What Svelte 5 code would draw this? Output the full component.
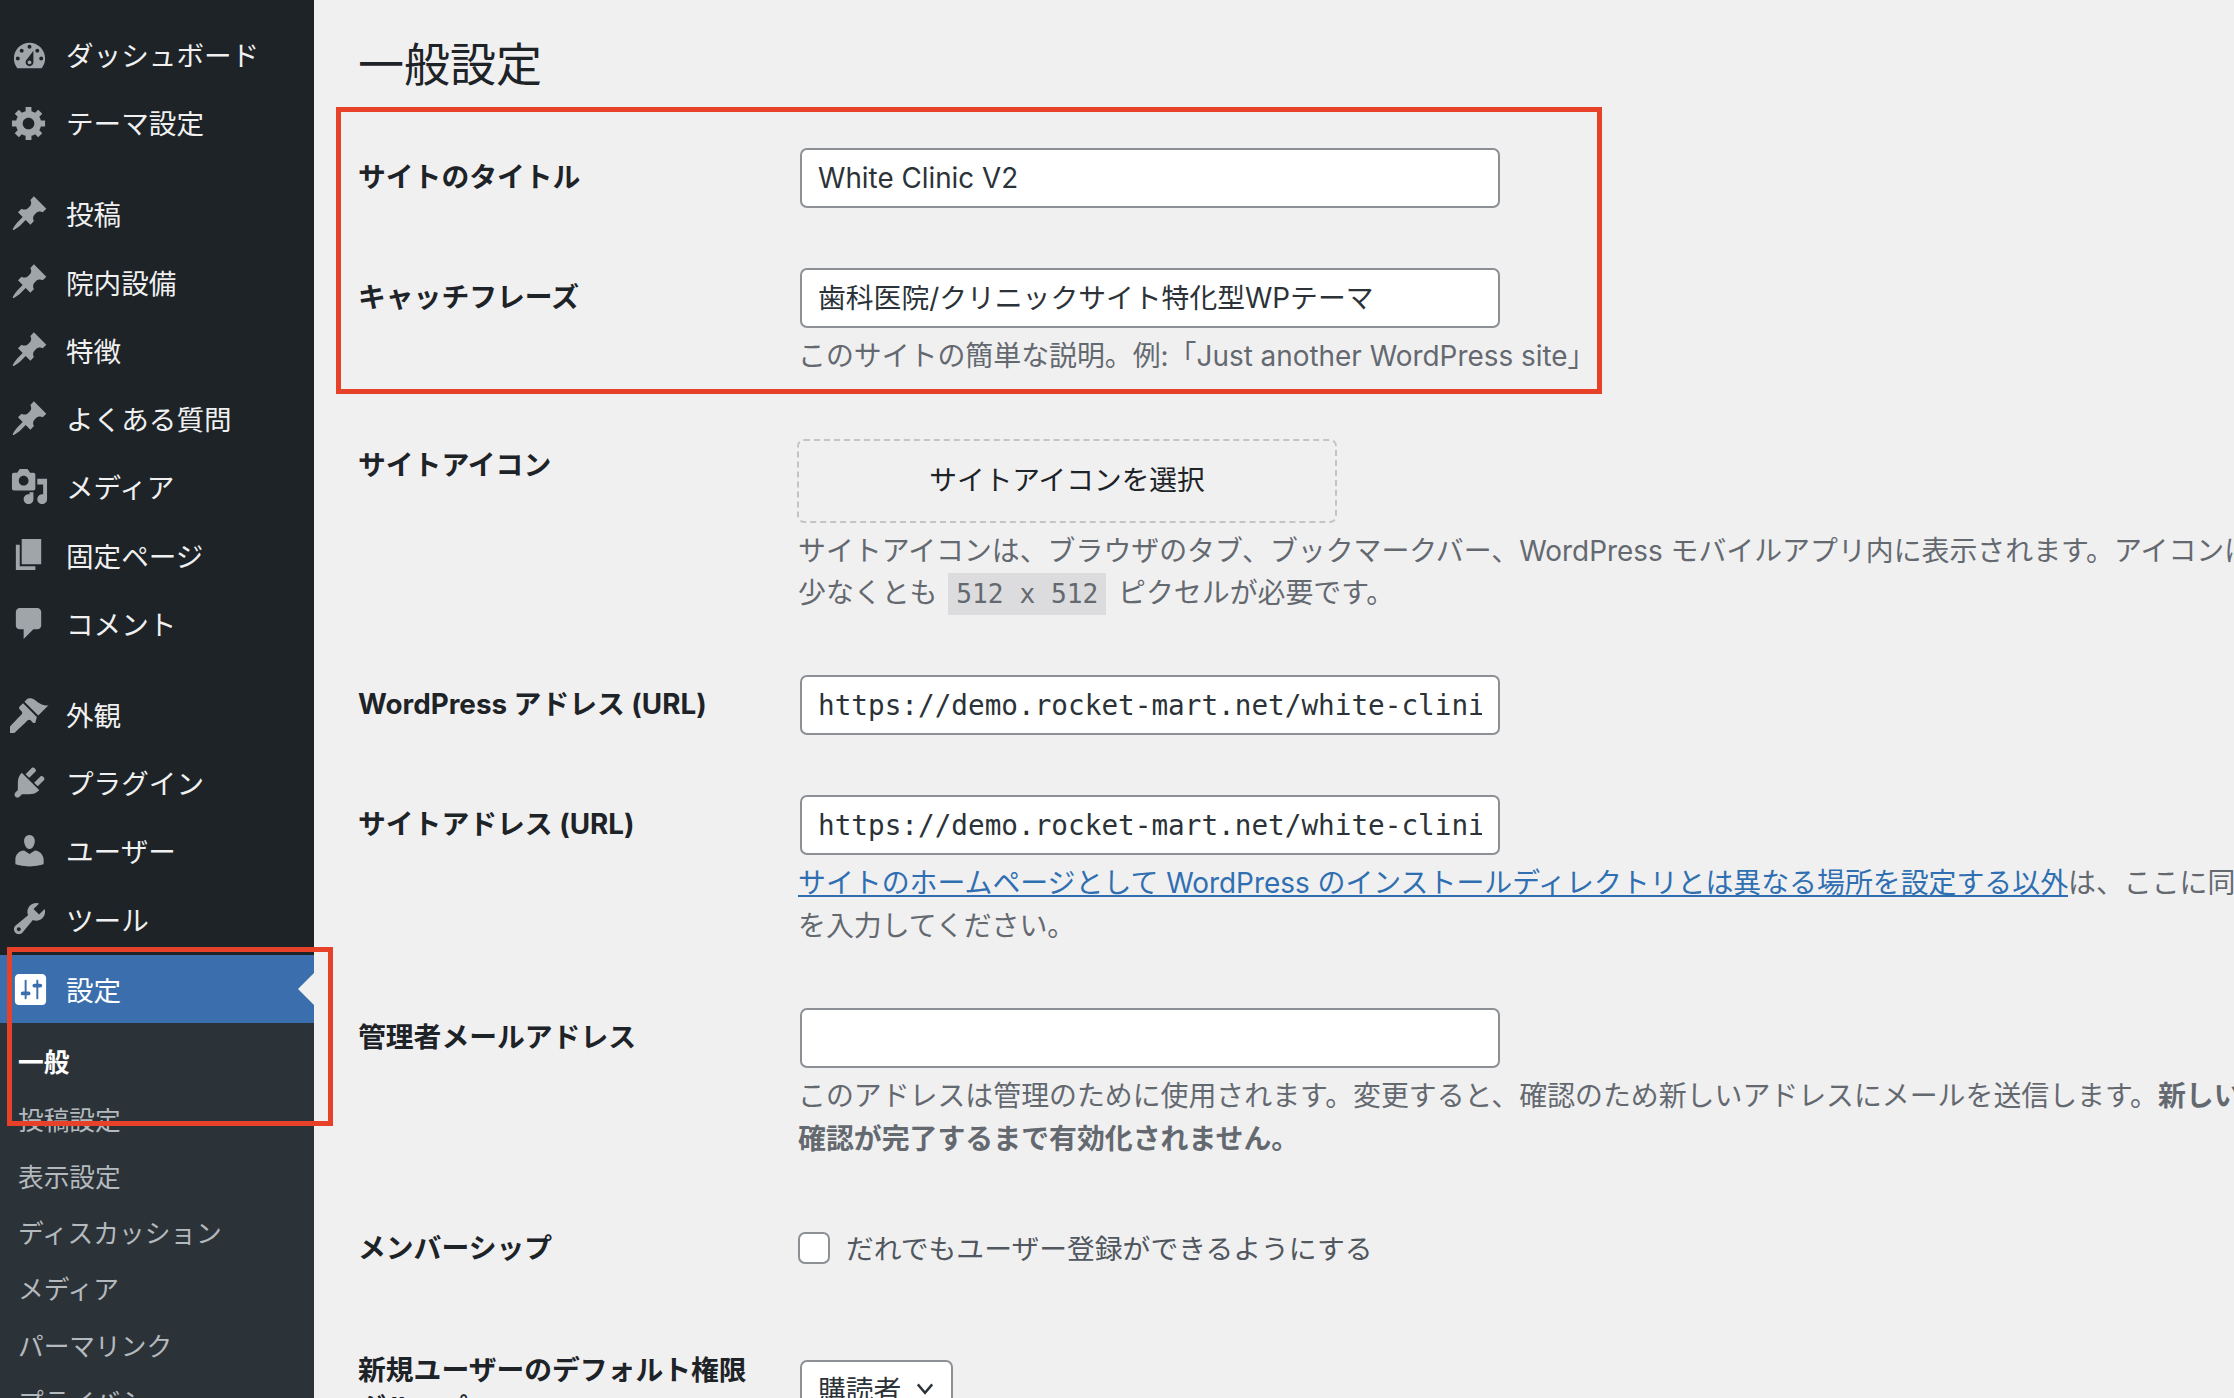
<script>
	const icons = {
		dashboard:
			'M3.76 16h12.48c1.1-1.37 1.76-3.11 1.76-5 0-4.42-3.58-8-8-8s-8 3.58-8 8c0 1.89.66 3.63 1.76 5zM10 4c.55 0 1 .45 1 1s-.45 1-1 1-1-.45-1-1 .45-1 1-1zM6 6c.55 0 1 .45 1 1s-.45 1-1 1-1-.45-1-1 .45-1 1-1zm8 0c.55 0 1 .45 1 1s-.45 1-1 1-1-.45-1-1 .45-1 1-1zm-5.37 5.55L12 7v6c0 1.1-.9 2-2 2s-2-.9-2-2c0-.57.24-1.08.63-1.45zM4 10c.55 0 1 .45 1 1s-.45 1-1 1-1-.45-1-1 .45-1 1-1zm12 0c.55 0 1 .45 1 1s-.45 1-1 1-1-.45-1-1 .45-1 1-1zm-5 3c0-.55-.45-1-1-1s-1 .45-1 1 .45 1 1 1 1-.45 1-1z',
		gear: 'M18 12h-2.18c-.17.7-.44 1.35-.81 1.93l1.54 1.54-2.1 2.1-1.54-1.54c-.58.36-1.23.63-1.91.79V19H8v-2.18c-.68-.16-1.33-.43-1.91-.79l-1.54 1.54-2.12-2.12 1.54-1.54c-.36-.58-.63-1.23-.79-1.91H1V9.03h2.17c.16-.7.44-1.35.8-1.94L2.43 5.55l2.1-2.1 1.54 1.54c.58-.37 1.24-.64 1.93-.81V2h3v2.18c.68.16 1.33.43 1.91.79l1.54-1.54 2.12 2.12-1.54 1.54c.36.59.64 1.24.8 1.94H18V12zm-8.5 1.5c1.66 0 3-1.34 3-3s-1.34-3-3-3-3 1.34-3 3 1.34 3 3 3z',
		pin: 'M10.44 3.02l1.82-1.82 6.36 6.35-1.83 1.82c-1.05-.68-2.48-.57-3.41.36l-.75.75c-.92.93-1.04 2.35-.35 3.41l-1.83 1.82-2.41-2.41-2.8 2.79c-.42.42-3.38 2.71-3.8 2.29s1.86-3.39 2.28-3.81l2.79-2.79L4.1 9.36l1.83-1.82c1.05.69 2.48.57 3.4-.36l.75-.75c.93-.92 1.05-2.35.36-3.41z',
		media:
			'M13 11V4c0-.55-.45-1-1-1h-1.67L9 1H5L3.67 3H2c-.55 0-1 .45-1 1v7c0 .55.45 1 1 1h10c.55 0 1-.45 1-1zM7 4.5c1.38 0 2.5 1.12 2.5 2.5S8.38 9.5 7 9.5 4.5 8.38 4.5 7 5.62 4.5 7 4.5zM14 6h5v10.5c0 1.38-1.12 2.5-2.5 2.5S14 17.88 14 16.5s1.12-2.5 2.5-2.5c.17 0 .34.02.5.05V9h-3V6zm-4 8.05V13h2v3.5c0 1.38-1.12 2.5-2.5 2.5S7 17.88 7 16.5 8.12 14 9.5 14c.17 0 .34.02.5.05z',
		page: 'M6 15V2h10v13H6zm-1 1h8v2H3V5h2v11z',
		comment: 'M5 2h9c1.1 0 2 .9 2 2v7c0 1.1-.9 2-2 2h-2l-5 5v-5H5c-1.1 0-2-.9-2-2V4c0-1.1.9-2 2-2z',
		brush:
			'M14.48 11.06L7.41 3.99l1.5-1.5c.5-.56 2.3-.47 3.51.32 1.21.8 1.43 1.28 2.91 2.1 1.18.64 2.45 1.26 4.45.85zm-.71.71L6.7 4.7 4.93 6.47c-.39.39-.39 1.02 0 1.41l1.06 1.06c.39.39.39 1.03 0 1.42-.6.6-6.4 6.73-6.4 6.73-.78.78-.78 2.05 0 2.83s2.05.78 2.83 0c0 0 6.13-5.8 6.73-6.4.39-.39 1.03-.39 1.42 0l1.06 1.06c.39.39 1.02.39 1.41 0z',
		plug: 'M13.11 4.36L9.87 7.6 8 5.73l3.24-3.24c.35-.34 1.05-.2 1.56.32.52.51.66 1.21.31 1.55zm-8 1.77l.91-1.12 9.01 9.01-1.19.84c-.71.71-2.63 1.16-3.82 1.16H6.14L4.9 17.26c-.59.59-1.54.59-2.12 0-.59-.58-.59-1.53 0-2.12l1.24-1.24v-3.88c0-1.13.4-3.19 1.09-3.89zm7.26 3.97l3.24-3.24c.34-.35 1.04-.21 1.55.31.52.51.66 1.21.31 1.55l-3.24 3.25z',
		user: 'M10 9.25c-2.27 0-2.73-3.44-2.73-3.44C7 4.02 7.82 2 9.97 2c2.16 0 2.98 2.02 2.71 3.81 0 0-.41 3.44-2.68 3.44zm0 2.57L12.72 10c2.39 0 4.52 2.33 4.52 4.53v2.49s-3.65 1.13-7.24 1.13c-3.65 0-7.24-1.13-7.24-1.13v-2.49c0-2.25 1.94-4.48 4.47-4.48z',
		tool: 'M16.68 9.77c-1.34 1.34-3.3 1.67-4.95.99l-5.41 6.52c-.99.99-2.59.99-3.58 0s-.99-2.59 0-3.57l6.52-5.42c-.68-1.65-.35-3.61.99-4.95 1.28-1.28 3.12-1.62 4.72-1.06l-2.89 2.89 2.82 2.82 2.86-2.87c.53 1.58.18 3.39-1.08 4.65zM3.81 16.21c.4.39 1.04.39 1.43 0 .4-.4.4-1.04 0-1.43-.39-.4-1.03-.4-1.43 0-.39.39-.39 1.03 0 1.43z',
		settings:
			'M18 16V4c0-1.1-.9-2-2-2H4c-1.1 0-2 .9-2 2v12c0 1.1.9 2 2 2h12c1.1 0 2-.9 2-2zM8 11h1c.55 0 1 .45 1 1s-.45 1-1 1H8v1.5c0 .28-.22.5-.5.5s-.5-.22-.5-.5V13H6c-.55 0-1-.45-1-1s.45-1 1-1h1V5.5c0-.28.22-.5.5-.5s.5.22.5.5V11zm5-2h-1c-.55 0-1-.45-1-1s.45-1 1-1h1V5.5c0-.28.22-.5.5-.5s.5.22.5.5V7h1c.55 0 1 .45 1 1s-.45 1-1 1h-1v5.5c0 .28-.22.5-.5.5s-.5-.22-.5-.5V9z'
	};

	const menu = [
		[
			{ label: 'ダッシュボード', icon: 'dashboard' },
			{ label: 'テーマ設定', icon: 'gear' }
		],
		[
			{ label: '投稿', icon: 'pin' },
			{ label: '院内設備', icon: 'pin' },
			{ label: '特徴', icon: 'pin' },
			{ label: 'よくある質問', icon: 'pin' },
			{ label: 'メディア', icon: 'media' },
			{ label: '固定ページ', icon: 'page' },
			{ label: 'コメント', icon: 'comment' }
		],
		[
			{ label: '外観', icon: 'brush' },
			{ label: 'プラグイン', icon: 'plug' },
			{ label: 'ユーザー', icon: 'user' },
			{ label: 'ツール', icon: 'tool' }
		]
	];

	const submenu = ['投稿設定', '表示設定', 'ディスカッション', 'メディア', 'パーマリンク', 'プライバシー'];
	const url = 'https://demo.rocket-mart.net/white-clinic-v2';
</script>

<div class="page">
	<aside class="sidebar">
		{#each menu as group}
			<ul class="group">
				{#each group as item}
					<li class="item">
						<svg class="icon" class:gauge={item.icon === 'dashboard'} viewBox="0 0 20 20"><path d={icons[item.icon]} /></svg>
						<span>{item.label}</span>
					</li>
				{/each}
			</ul>
		{/each}
		<div class="item current">
			<svg class="icon" viewBox="0 0 20 20"><path fill-rule="evenodd" d={icons.settings} /></svg>
			<span>設定</span>
		</div>
		<ul class="sub">
			<li class="active">一般</li>
			{#each submenu as name}
				<li>{name}</li>
			{/each}
		</ul>
	</aside>

	<main class="main">
		<h1>一般設定</h1>

		<div class="row">
			<div class="label">サイトのタイトル</div>
			<div class="field"><input class="text" value="White Clinic V2" readonly /></div>
		</div>

		<div class="row">
			<div class="label">キャッチフレーズ</div>
			<div class="field">
				<input class="text cjk" value="歯科医院/クリニックサイト特化型WPテーマ" readonly />
				<p class="hint">このサイトの簡単な説明。例:「Just another WordPress site」</p>
			</div>
		</div>

		<div class="row">
			<div class="label icon-label">サイトアイコン</div>
			<div class="field">
				<button class="icon-picker">サイトアイコンを選択</button>
				<p class="hint">
					サイトアイコンは、ブラウザのタブ、ブックマークバー、WordPress モバイルアプリ内に表示されます。アイコンは正方形で、<br />
					少なくとも <code>512 x 512</code> ピクセルが必要です。
				</p>
			</div>
		</div>

		<div class="row">
			<div class="label">WordPress アドレス (URL)</div>
			<div class="field"><input class="text mono" value={url} readonly /></div>
		</div>

		<div class="row">
			<div class="label">サイトアドレス (URL)</div>
			<div class="field">
				<input class="text mono" value={url} readonly />
				<p class="hint">
					<a href="#top">サイトのホームページとして WordPress のインストールディレクトリとは異なる場所を設定する以外</a>は、ここに同じアドレス<br />
					を入力してください。
				</p>
			</div>
		</div>

		<div class="row">
			<div class="label">管理者メールアドレス</div>
			<div class="field">
				<input class="text" value="" readonly />
				<p class="hint">
					このアドレスは管理のために使用されます。変更すると、確認のため新しいアドレスにメールを送信します。<strong>新しいアドレスは</strong><br />
					<strong>確認が完了するまで有効化されません。</strong>
				</p>
			</div>
		</div>

		<div class="row member">
			<div class="label member-label">メンバーシップ</div>
			<label class="check"><input type="checkbox" /><span>だれでもユーザー登録ができるようにする</span></label>
		</div>

		<div class="row">
			<div class="label narrow">新規ユーザーのデフォルト権限グループ</div>
			<div class="field">
				<div class="select">
					<span>購読者</span>
					<svg viewBox="0 0 20 20" width="24" height="24"><path d="M4 7l6 7 6-7" /></svg>
				</div>
			</div>
		</div>
	</main>

	<div class="mark mark-form"></div>
	<div class="mark mark-menu"></div>
</div>

<style>
	:global(body) {
		margin: 0;
		overflow: hidden;
		background: #f0f0f1;
	}
	.page {
		position: relative;
		display: flex;
		height: 1398px;
		overflow: hidden;
		font-family: Inter, 'Noto Sans CJK JP', sans-serif;
		color: #1d2327;
	}
	ul {
		list-style: none;
		margin: 0;
		padding: 0;
	}

	.sidebar {
		flex: 0 0 314px;
		padding-top: 20px;
		background: #1d2327;
		overflow: hidden;
	}
	.group {
		margin-bottom: 22.5px;
	}
	.group:nth-child(3) {
		margin-bottom: 2px;
	}
	.item {
		position: relative;
		display: flex;
		align-items: center;
		gap: 17px;
		height: 68.3px;
		padding-left: 10px;
		font-size: 27.6px;
		color: #f0f0f1;
	}
	.icon {
		flex: none;
		width: 39px;
		height: 39px;
		fill: #a0a5aa;
	}
	.icon.gauge {
		transform: translateY(2px);
	}
	.current {
		background: #3a6ead;
		color: #fff;
	}
	.current .icon {
		fill: #fff;
		transform: translateX(1px);
	}
	.current::after {
		content: '';
		position: absolute;
		right: 0;
		top: 18px;
		border: 16px solid transparent;
		border-left: 0;
		border-right-color: #f0f0f1;
	}
	.sub {
		padding: 12px 0 0 18px;
		height: 400px;
		background: #2c3338;
		font-size: 25.7px;
		color: #b4b9be;
	}
	.sub li {
		height: 56.4px;
		line-height: 56.4px;
		white-space: nowrap;
	}
	.sub .active {
		height: 58px;
		color: #fff;
		font-weight: 700;
	}

	.main {
		flex: 1;
		min-width: 0;
		padding-left: 44px;
	}
	h1 {
		margin: 0;
		height: 118px;
		padding-top: 38px;
		box-sizing: border-box;
		font-size: 46px;
		line-height: 52px;
		font-weight: 400;
	}
	.row {
		display: grid;
		grid-template-columns: 440px 1fr;
		padding: 30px 0;
	}
	.label {
		padding-top: 8px;
		width: 400px;
		font-size: 27.8px;
		line-height: 42px;
		font-weight: 700;
		white-space: nowrap;
	}
	.label.icon-label {
		padding-top: 6px;
	}
	.label.member-label {
		padding-top: 0;
	}
	.label.narrow {
		padding-top: 0;
		margin-top: -9px;
		white-space: normal;
		line-height: 38px;
	}
	.field {
		min-width: 0;
	}
	.text {
		display: block;
		box-sizing: border-box;
		width: 700px;
		height: 60px;
		margin: 0 0 0 2px;
		padding: 0 16px;
		border: 2px solid #8c8f94;
		border-radius: 7px;
		background: #fff;
		font: 27.8px Inter, 'Noto Sans CJK JP', sans-serif;
		color: #2c3338;
		outline: none;
	}
	.text.cjk {
		padding-bottom: 4px;
	}
	.mono {
		font-family: 'DejaVu Sans Mono', monospace;
		font-size: 27.7px;
	}
	.hint {
		margin: 7px 0 0;
		font-size: 27.9px;
		line-height: 42.7px;
		color: #646970;
		white-space: nowrap;
	}
	.hint a {
		color: #2f6fb1;
		text-decoration: underline;
	}
	code {
		display: inline-block;
		margin: 0 4px 0 3px;
		padding: 0 8px;
		background: #dcdcde;
		font-family: 'DejaVu Sans Mono', monospace;
		font-size: 26.2px;
		line-height: 42px;
	}
	.icon-picker {
		display: block;
		box-sizing: border-box;
		width: 540px;
		height: 84px;
		margin: 1px 0 1px -1px;
		padding-bottom: 6px;
		border: 2px dashed #c3c4c7;
		border-radius: 7px;
		background: transparent;
		font: 27.7px Inter, 'Noto Sans CJK JP', sans-serif;
		color: #1d2327;
	}
	.member {
		padding: 37px 0 61px;
	}
	.check {
		display: flex;
		align-items: center;
		gap: 16px;
		height: 42px;
		font-size: 27.8px;
		color: #50575e;
	}
	.check span {
		padding-bottom: 3px;
	}
	.check input {
		appearance: none;
		flex: none;
		width: 32px;
		height: 32px;
		margin: 0;
		border: 2px solid #8c8f94;
		border-radius: 7px;
		background: #fff;
	}
	.select {
		display: inline-flex;
		align-items: center;
		gap: 12px;
		box-sizing: border-box;
		height: 60px;
		margin-left: 2px;
		padding: 0 14px 4px 16px;
		border: 2px solid #8c8f94;
		border-radius: 7px;
		background: #fff;
		font-size: 27.8px;
		color: #2c3338;
	}
	.select svg {
		fill: none;
		stroke: #2c3338;
		stroke-width: 2;
	}

	/* annotation boxes drawn over the screenshot */
	.mark {
		position: absolute;
		box-sizing: border-box;
		border: 5px solid #e8412a;
	}
	.mark-form {
		left: 336px;
		top: 107px;
		width: 1266px;
		height: 287px;
	}
	.mark-menu {
		left: 7px;
		top: 947px;
		width: 326px;
		height: 179px;
	}
</style>
